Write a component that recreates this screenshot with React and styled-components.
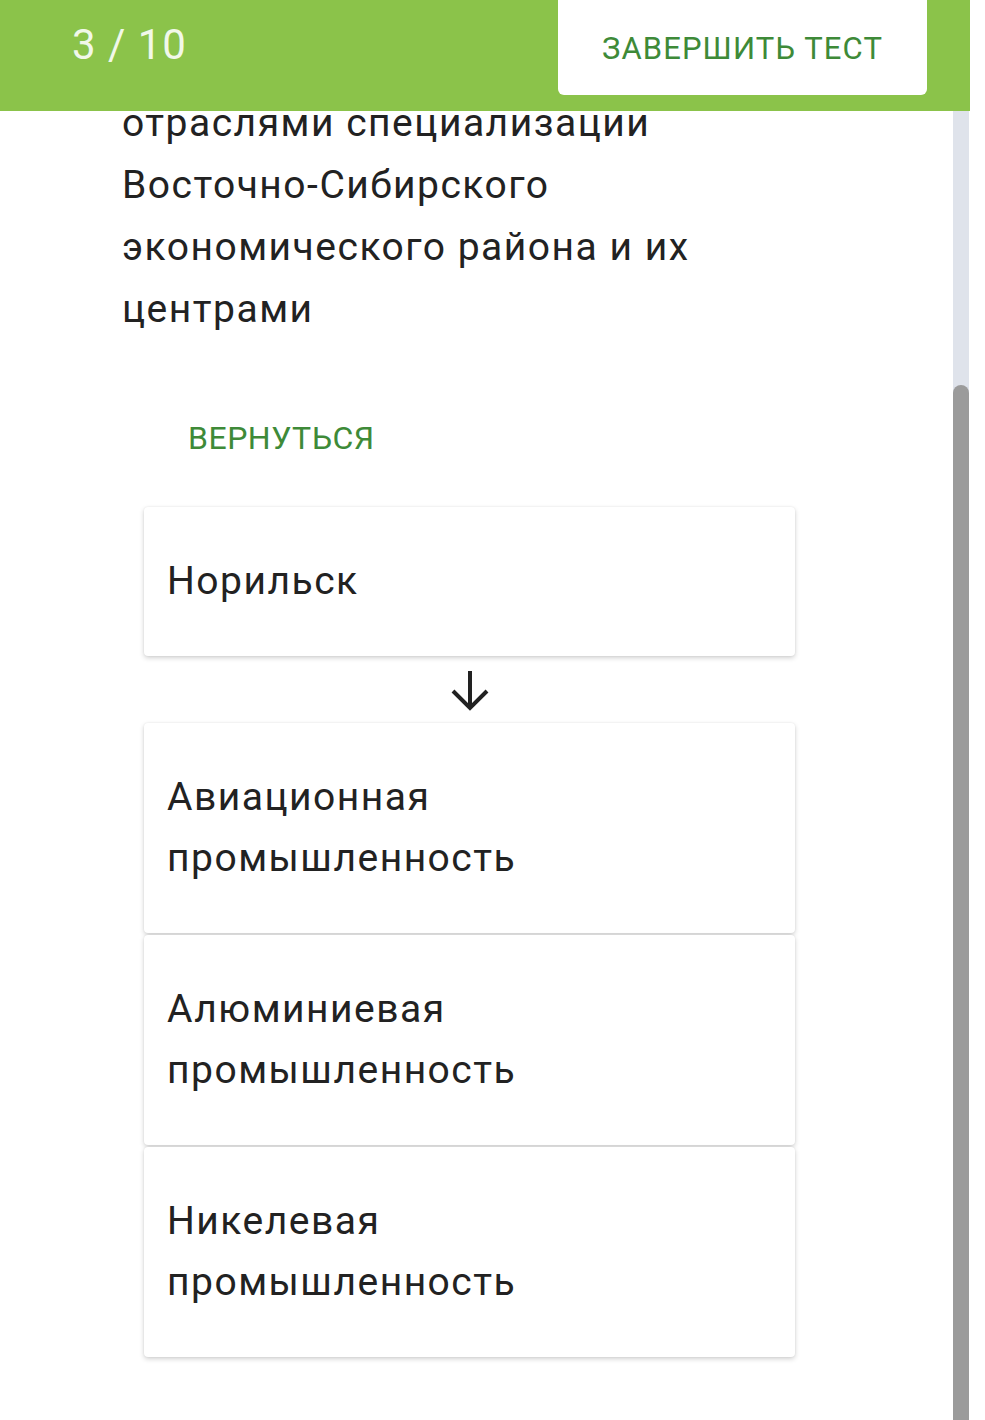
import React from 'react'
import styled, { createGlobalStyle } from 'styled-components'

const GlobalStyle = createGlobalStyle`
  html, body {
    margin: 0;
    padding: 0;
    background: #ffffff;
    font-family: Roboto, "Noto Sans", sans-serif;
  }
`;

const Page = styled.div`
  width: 985px;
  height: 1420px;
  display: flex;
  flex-direction: column;
  overflow: hidden;
`;

const Header = styled.div`
  width: 970px;
  height: 111px;
  flex-shrink: 0;
  background: #8bc34a;
  display: flex;
  justify-content: space-between;
  align-items: flex-start;
  box-sizing: border-box;
  padding: 0 43px 0 72px;
  position: relative;
  z-index: 2;
`;

const Counter = styled.div`
  color: #f1f8e9;
  font-size: 42px;
  line-height: 90px;
  letter-spacing: 1px;
`;

const FinishButton = styled.button`
  width: 369px;
  height: 95px;
  border: none;
  background: #ffffff;
  border-radius: 0 0 6px 6px;
  color: #3e8a38;
  font-family: Roboto, sans-serif;
  font-size: 31px;
  letter-spacing: 1.1px;
  text-transform: uppercase;
  padding: 2px 0 0;
`;

const Body = styled.div`
  flex: 1;
  display: flex;
  width: 970px;
  overflow: hidden;
`;

const Content = styled.div`
  flex: 1;
  display: flex;
  flex-direction: column;
  padding-left: 122px;
`;

const Question = styled.div`
  margin-top: -19px;
  width: 620px;
  font-size: 39px;
  line-height: 62px;
  letter-spacing: 1.5px;
  color: #222222;
`;

const BackLink = styled.div`
  margin: 78px 0 0 66px;
  color: #3e8a38;
  font-size: 32px;
  line-height: 40px;
  letter-spacing: 0.5px;
  text-transform: uppercase;
`;

const Chain = styled.div`
  margin: 49px 0 0 22px;
  width: 651px;
  display: flex;
  flex-direction: column;
`;

const Card = styled.div`
  background: #ffffff;
  border-radius: 4px;
  box-shadow: 0 2px 5px rgba(0, 0, 0, 0.18), 0 0 2px rgba(0, 0, 0, 0.08);
  padding: 44px 23px;
  font-size: 39px;
  line-height: 61px;
  letter-spacing: 1.5px;
  color: #222222;
  margin-bottom: ${p => (p.$gap ? '2px' : '0')};
`;

const ArrowRow = styled.div`
  height: 67px;
  display: flex;
  justify-content: center;
  align-items: center;
`;

const Track = styled.div`
  width: 16px;
  margin-right: 1px;
  background: #dfe3eb;
  display: flex;
  flex-direction: column;
`;

const Thumb = styled.div`
  margin-top: 274px;
  flex: 1;
  background: #9b9b9b;
  border-radius: 8px 8px 0 0;
`;

const answers = [
  ['Авиационная', 'промышленность'],
  ['Алюминиевая', 'промышленность'],
  ['Никелевая', 'промышленность'],
];

export default function App() {
  return (
    <Page>
      <GlobalStyle />
      <Header>
        <Counter>3 / 10</Counter>
        <FinishButton>Завершить тест</FinishButton>
      </Header>
      <Body>
        <Content>
          <Question>
            отраслями специализации Восточно-Сибирского экономического района и их центрами
          </Question>
          <BackLink>Вернуться</BackLink>
          <Chain>
            <Card>Норильск</Card>
            <ArrowRow>
              <svg width="44" height="44" viewBox="0 0 44 44" fill="none">
                <path d="M22 3 V40 M5 23 L22 40 L39 23" stroke="#222" strokeWidth="4" />
              </svg>
            </ArrowRow>
            {answers.map(([first, second], i) => (
              <Card key={first} $gap={i < answers.length - 1}>
                {first}
                <br />
                {second}
              </Card>
            ))}
          </Chain>
        </Content>
        <Track>
          <Thumb />
        </Track>
      </Body>
    </Page>
  )
}
